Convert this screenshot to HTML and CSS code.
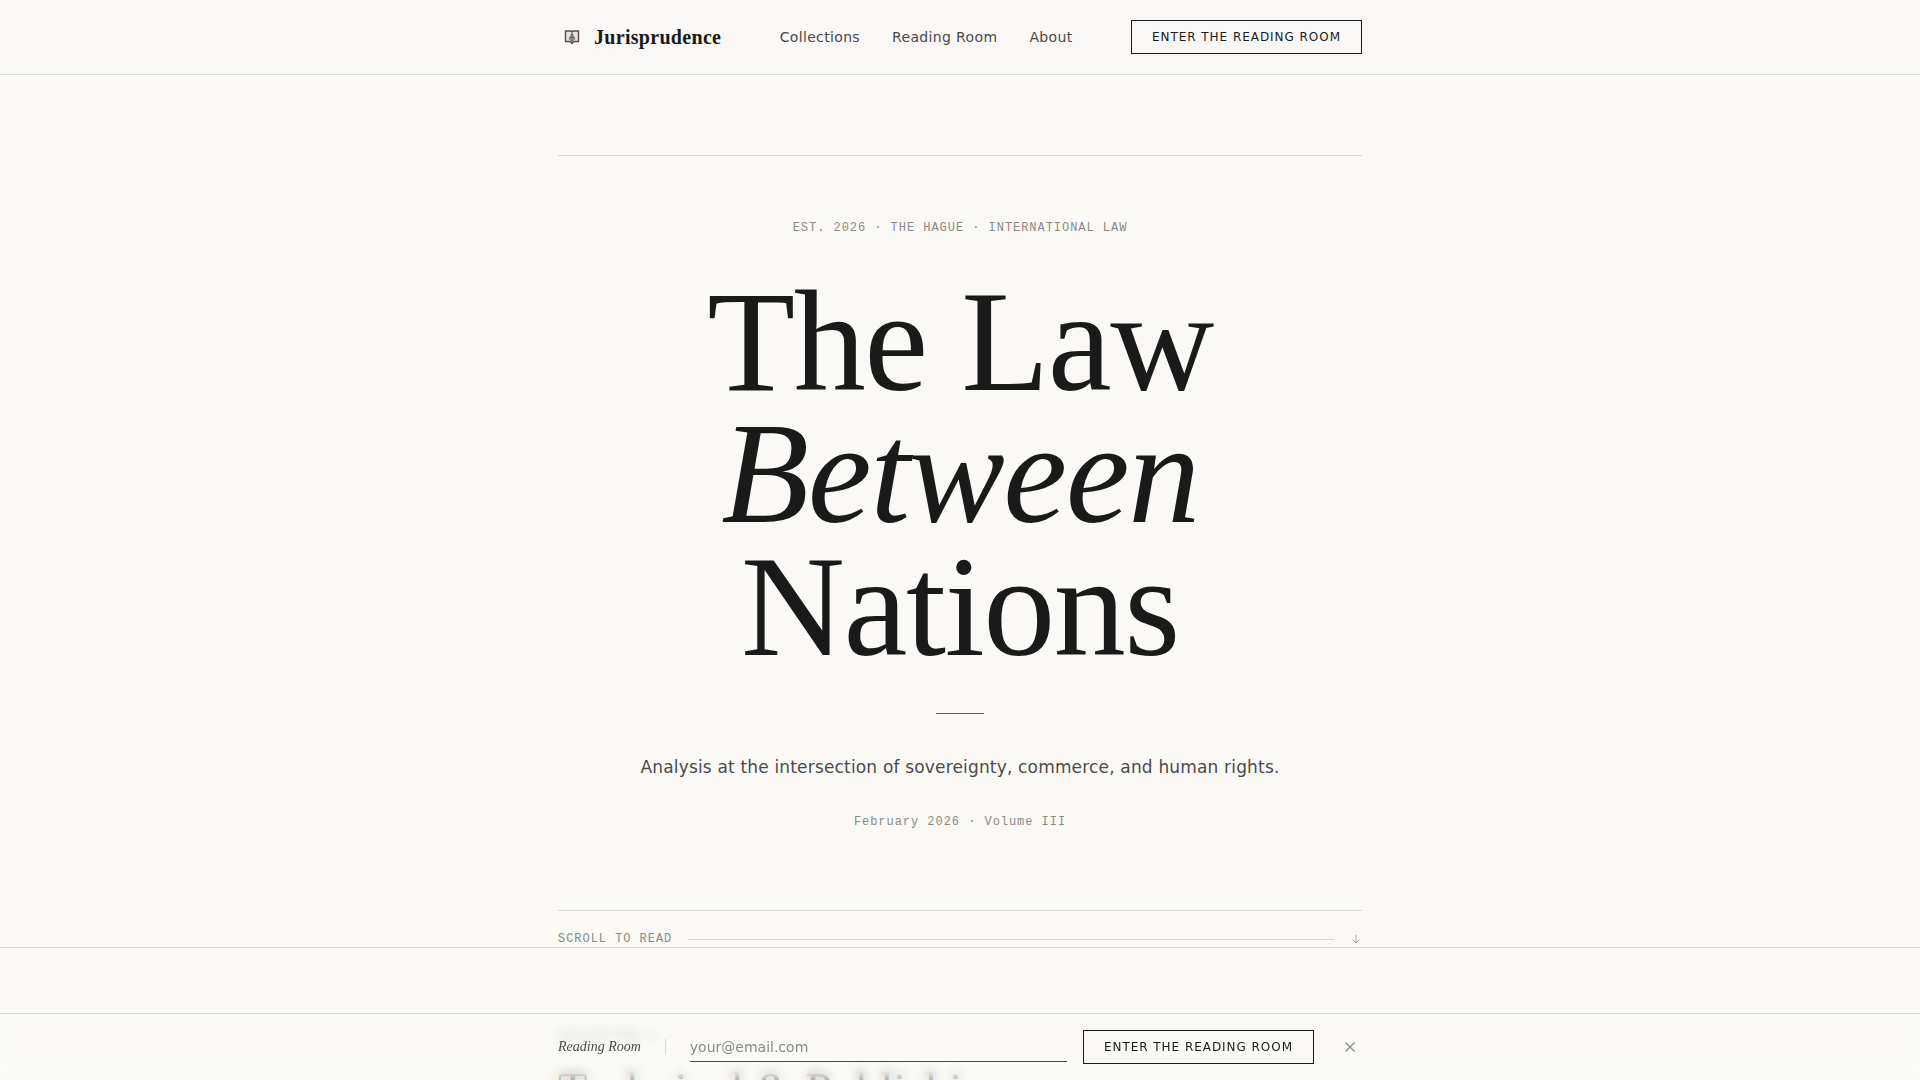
FILE: index.html
```html
<!DOCTYPE html>
<html lang="en">
<head>
<meta charset="utf-8">
<meta name="viewport" content="width=device-width, initial-scale=1">
<title>Jurisprudence</title>
<link rel="stylesheet" href="styles.css">
</head>
<body>
<header class="site-header">
  <div class="container header-row">
    <a class="brand" href="#">
      <svg class="brand-mark" viewBox="0 0 28 28" aria-hidden="true">
        <path d="M7.500 8h4.500q1.500 0 2 1 .5-1 2-1h4.500v10.500h-3.500q-2 .3-3 1.800-1-1.500-3-1.800H7.500z" fill="#e9e3e3" stroke="#5c4a4e" stroke-width="1.400"/>
        <path d="M14 10l3 6-3 2.500-3-2.500z" fill="#a39c9b" stroke="#857b7b" stroke-width="1"/>
        <path d="M14 11v8M12 14.500h4" stroke="#5f5556" stroke-width=".8"/>
      </svg>
      <span>Jurisprudence</span>
    </a>
    <nav class="nav" aria-label="Main">
      <a href="#collections">Collections</a>
      <a href="#reading-room">Reading Room</a>
      <a href="#about">About</a>
    </nav>
    <button class="button" type="button">Enter the Reading Room</button>
  </div>
</header>
<main>
  <section class="hero container">
    <div class="hero-body">
      <p class="eyebrow">Est. 2026 · The Hague · International Law</p>
      <h1 class="title">The Law<br><em>Between</em><br>Nations</h1>
      <div class="accent"></div>
      <p class="lede">Analysis at the intersection of sovereignty, commerce, and human rights.</p>
      <p class="issue">February 2026 · Volume III</p>
    </div>
    <div class="scroll-row">
      <span>Scroll to read</span>
      <span class="scroll-line"></span>
      <svg class="arrow" viewBox="0 0 12 12" aria-hidden="true"><path d="M6 2v8M2.500 6.500L6 10l3.500-3.500" fill="none" stroke="currentColor"/></svg>
    </div>
  </section>
  <section class="collection" id="collections">
    <div class="container">
      <p class="collection-label">Collection I</p>
      <h2 class="collection-title">Technical &amp; Publishing</h2>
    </div>
  </section>
</main>
<aside class="signup" id="reading-room">
  <form class="container signup-row">
    <label class="signup-label" for="email">Reading Room</label>
    <span class="divider"></span>
    <input class="email" id="email" type="email" placeholder="your@email.com">
    <button class="button" type="button">Enter the Reading Room</button>
    <button class="close" type="button" aria-label="Close">
      <svg viewBox="0 0 12 12" aria-hidden="true"><path d="M1.500 1.500l9 9M10.500 1.500l-9 9" fill="none" stroke="currentColor" stroke-width="1.300"/></svg>
    </button>
  </form>
</aside>
</body>
</html>
```
FILE: styles.css
```css
* { box-sizing: border-box; }

body {
  margin: 0;
  background: #faf9f6;
  color: #1a1a1a;
  font-family: "DejaVu Sans", sans-serif;
}

h1, h2, p { margin: 0; font-weight: 400; }
a { color: inherit; text-decoration: none; }

.container {
  width: 100%;
  max-width: 900px;
  margin: 0 auto;
  padding: 0 48px;
}

.site-header {
  padding: 20px 0;
  border-bottom: 1px solid #d8d8d5;
  background: #f9f8f6;
}

.header-row {
  display: flex;
  align-items: center;
  justify-content: space-between;
}

.brand {
  display: flex;
  align-items: center;
  gap: 8px;
  font: 700 20px/24px "Liberation Serif", serif;
  letter-spacing: 0.015em;
}
.brand-mark { width: 28px; height: 28px; }

.nav {
  display: flex;
  gap: 32px;
  font-size: 14px;
  line-height: 20px;
  letter-spacing: 0.025em;
  color: #4a4a4a;
}

.button {
  height: 34px;
  padding: 0 20px;
  border: 1px solid #1a1a1a;
  border-radius: 0;
  background: transparent;
  color: #1a1a1a;
  font: 400 12px/16px "DejaVu Sans", sans-serif;
  letter-spacing: 0.08em;
  text-transform: uppercase;
  white-space: nowrap;
}

.hero { padding-top: 80px; }

.hero-body {
  display: flex;
  flex-direction: column;
  align-items: center;
  padding: 64px 0 80px;
  border-top: 1px solid #d8d8d5;
  border-bottom: 1px solid #d8d8d5;
  text-align: center;
}

.eyebrow, .issue, .scroll-row, .collection-label {
  font: 400 12px/16px "Liberation Mono", monospace;
  letter-spacing: 0.08em;
  color: #8a8a85;
}
.eyebrow, .scroll-row, .collection-label { text-transform: uppercase; }

.title {
  margin-top: 40px;
  font: 400 144px/0.92 "Liberation Serif", serif;
  letter-spacing: -0.01em;
}

.accent {
  width: 48px;
  height: 1px;
  margin-top: 40px;
  background: #a84248;
}

.lede {
  margin-top: 40px;
  font-size: 17px;
  line-height: 27px;
  letter-spacing: 0.01em;
  color: #4a4a4a;
}

.issue { margin-top: 33px; }

.scroll-row {
  display: flex;
  align-items: center;
  gap: 16px;
  padding-top: 20px;
}
.scroll-line { flex: 1; height: 1px; background: #d8d8d5; }
.arrow { width: 12px; height: 12px; opacity: 0.8; }

.collection {
  padding: 80px 0;
  border-top: 1px solid #d8d8d5;
}
.collection-title {
  margin-top: 20px;
  font: 400 48px/52px "Liberation Serif", serif;
}

.signup {
  position: fixed;
  inset: auto 0 0;
  padding: 16px 0;
  border-top: 1px solid #d8d8d5;
  background: rgba(250, 249, 246, 0.5);
  backdrop-filter: blur(6px);
}
.signup-row { display: flex; align-items: center; }
.signup-label {
  font: italic 400 14px/20px "Liberation Serif", serif;
  color: #4a4a4a;
}
.divider {
  width: 1px;
  height: 16px;
  margin: 0 24px;
  background: #d8d8d5;
}
.email {
  flex: 1;
  min-width: 0;
  height: 30px;
  margin-right: 16px;
  padding: 0;
  border: 0;
  border-bottom: 1px solid #4a4a4a;
  border-radius: 0;
  background: transparent;
  font: 400 14px/20px "DejaVu Sans", sans-serif;
}
.email::placeholder { color: #8a8a85; opacity: 1; }
.close {
  width: 24px;
  height: 24px;
  margin-left: 24px;
  padding: 6px;
  border: 0;
  background: transparent;
  color: #8a8a85;
}
.close svg { display: block; width: 12px; height: 12px; }
```
